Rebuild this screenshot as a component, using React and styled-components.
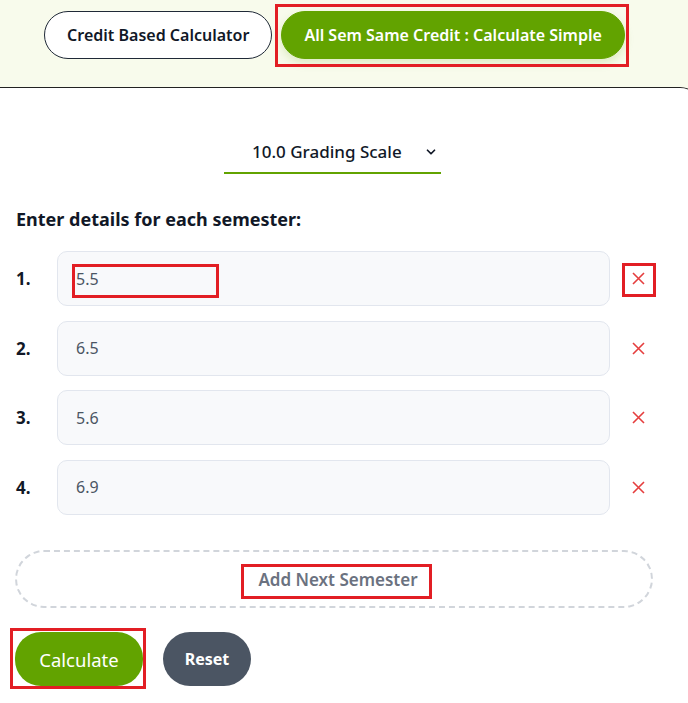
import React from 'react';
import styled, { createGlobalStyle } from 'styled-components';

const GlobalStyle = createGlobalStyle`
  html, body {
    margin: 0;
    padding: 0;
    background: rgb(248, 251, 236);
    overflow: hidden;
  }
  body {
    font-family: "Noto Sans", "Open Sans", sans-serif;
    color: rgb(17, 24, 39);
  }
  * { box-sizing: border-box; }
`;

const semesters = [
  { id: 1, value: '5.5', marked: true },
  { id: 2, value: '6.5' },
  { id: 3, value: '5.6' },
  { id: 4, value: '6.9' },
];

function App() {
  return (
    <Page>
      <GlobalStyle />
      <TabBar>
        <Tab>Credit Based Calculator</Tab>
        <Marked>
          <Tab active>All Sem Same Credit : Calculate Simple</Tab>
          <Marker style={{ inset: '-7px -4px -8px -6px' }} />
        </Marked>
      </TabBar>

      <Card>
        <SelectRow>
          <Select>
            <span>10.0 Grading Scale</span>
            <Chevron viewBox="0 0 24 24">
              <path d="M6 9l6 6 6-6" />
            </Chevron>
          </Select>
        </SelectRow>

        <Heading>Enter details for each semester:</Heading>

        <List>
          {semesters.map((s) => (
            <Row key={s.id}>
              <Index>{s.id}.</Index>
              <Field>
                <Value>{s.value}</Value>
                {s.marked ? <Marker style={{ left: 14, top: 12, width: 147, height: 34 }} /> : null}
              </Field>
              <Remove>
                <svg width="13" height="13" viewBox="0 0 13 13">
                  <path d="M1 1L12 12M12 1L1 12" stroke="rgb(229, 62, 62)" strokeWidth="1.6" />
                </svg>
                {s.marked ? <Marker style={{ left: 12, top: -9, width: 34, height: 34 }} /> : null}
              </Remove>
            </Row>
          ))}
        </List>

        <AddButton>
          <Marked>
            <AddText>Add Next Semester</AddText>
            <Marker style={{ inset: '-4px -14px -8px -9px' }} />
          </Marked>
        </AddButton>

        <Actions>
          <Marked>
            <Calculate>Calculate</Calculate>
            <Marker style={{ inset: '-4px -3px -3px -5px' }} />
          </Marked>
          <Reset>Reset</Reset>
        </Actions>
      </Card>
    </Page>
  );
}

const Page = styled.div`
  width: 688px;
  min-height: 703px;
`;

const TabBar = styled.div`
  display: flex;
  align-items: flex-start;
  justify-content: center;
  gap: 9px;
  padding: 11px 19px 0 0;
  height: 87px;
`;

const Tab = styled.button`
  height: 48px;
  padding: 0 22px;
  border-radius: 999px;
  font-family: inherit;
  font-size: 16px;
  font-weight: 600;
  white-space: nowrap;
  border: 1px solid ${(p) => (p.active ? 'rgb(98, 163, 0)' : 'rgb(31, 41, 55)')};
  background: ${(p) => (p.active ? 'rgb(98, 163, 0)' : 'rgb(255, 255, 255)')};
  color: ${(p) => (p.active ? 'rgb(255, 255, 255)' : 'rgb(17, 24, 39)')};
  box-shadow: ${(p) => (p.active ? '0 4px 10px rgba(98, 163, 0, 0.18)' : 'none')};
`;

const Marked = styled.div`
  position: relative;
  display: inline-flex;
`;

const Marker = styled.span`
  position: absolute;
  border: 3px solid rgb(226, 30, 36);
  pointer-events: none;
`;

const Card = styled.div`
  margin: 0 -14px 0 -20px;
  background: rgb(255, 255, 255);
  border-top: 1.5px solid rgb(34, 34, 34);
  border-radius: 22px 22px 0 0;
  padding: 47px 36px 40px 36px;
  min-height: 640px;
`;

const SelectRow = styled.div`
  display: flex;
  justify-content: center;
  padding-right: 17px;
`;

const Select = styled.div`
  width: 217px;
  height: 39px;
  display: flex;
  align-items: center;
  justify-content: space-between;
  padding: 0 3px 4px 28px;
  border-bottom: 2px solid rgb(98, 163, 0);
  font-size: 17px;
  font-weight: 500;
  color: rgb(17, 24, 39);
`;

const Chevron = styled.svg`
  width: 14px;
  height: 14px;
  fill: none;
  stroke: rgb(17, 24, 39);
  stroke-width: 3;
  stroke-linecap: round;
  stroke-linejoin: round;
`;

const Heading = styled.h3`
  margin: 33px 0 20px;
  font-size: 18px;
  font-weight: 700;
  color: rgb(17, 24, 39);
`;

const List = styled.div`
  display: flex;
  flex-direction: column;
  gap: 14.5px;
`;

const Row = styled.div`
  display: grid;
  grid-template-columns: 41px 553px 56px;
  align-items: center;
`;

const Index = styled.span`
  font-size: 17px;
  font-weight: 700;
`;

const Field = styled.div`
  position: relative;
  height: 55px;
  display: flex;
  align-items: center;
  padding-left: 18px;
  background: rgb(248, 249, 251);
  border: 1px solid rgb(226, 230, 238);
  border-radius: 10px;
`;

const Value = styled.span`
  font-size: 16px;
  color: rgb(75, 85, 99);
`;

const Remove = styled.div`
  position: relative;
  display: flex;
  justify-content: center;
  align-items: center;
  padding-left: 1px;
`;

const AddButton = styled.div`
  margin: 35.5px 13px 0 -1px;
  height: 58px;
  display: flex;
  align-items: center;
  justify-content: center;
  border: 2px dashed rgb(209, 213, 219);
  border-radius: 999px;
`;

const AddText = styled.span`
  font-size: 17px;
  font-weight: 600;
  color: rgb(107, 114, 128);
  padding-left: 8px;
`;

const Actions = styled.div`
  display: flex;
  gap: 20px;
  margin-top: 24px;
  margin-left: -1px;
`;

const Calculate = styled.button`
  width: 128px;
  height: 54px;
  border: none;
  border-radius: 26px;
  background: rgb(98, 163, 0);
  color: rgb(255, 255, 255);
  font-family: inherit;
  font-size: 18.5px;
  font-weight: 400;
`;

const Reset = styled.button`
  width: 88px;
  height: 54px;
  border: none;
  border-radius: 27px;
  background: rgb(75, 85, 99);
  color: rgb(255, 255, 255);
  font-family: inherit;
  font-size: 16px;
  font-weight: 700;
`;

export default App;
